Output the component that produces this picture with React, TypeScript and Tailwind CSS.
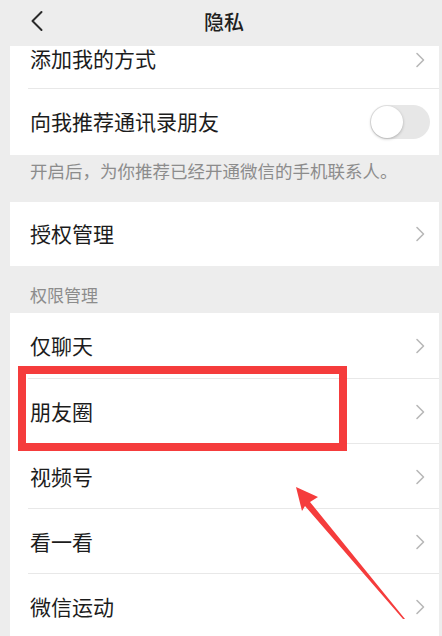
import React from 'react'

const font = { fontFamily: '"Noto Sans CJK SC", "Noto Sans", sans-serif' }

function Chevron() {
  return (
    <svg width="10" height="16" viewBox="0 0 10 16" className="shrink-0">
      <path d="M2 1.5 L8.5 8 L2 14.5" fill="none" stroke="#b8b8b8" strokeWidth="1.6" strokeLinecap="round" strokeLinejoin="round" />
    </svg>
  )
}

function Row({ label, divider = true, h = 'h-[65px]' }: { label: string; divider?: boolean; h?: string }) {
  return (
    <div className={`relative flex items-center justify-between bg-white pl-5 pr-[14px] ${h}`}>
      <span className="text-[21px] leading-[28px] text-[#1c1c1c] -mt-[2px]">{label}</span>
      <Chevron />
      {divider && <div className="absolute bottom-0 left-[18px] right-0 h-px bg-[#e8e8e8]" />}
    </div>
  )
}

export default function App() {
  const permRows = ['仅聊天', '朋友圈', '视频号', '看一看', '微信运动']

  return (
    <div className="relative w-[442px] h-[636px] overflow-hidden bg-[#ededed]" style={font}>
      {/* header */}
      <div className="relative flex h-[46px] items-center justify-center bg-[#ededed]">
        <svg width="14" height="22" viewBox="0 0 14 22" className="absolute left-[30px] top-[10px]">
          <path d="M11.5 2 L2.5 11 L11.5 20" fill="none" stroke="#2a2a2a" strokeWidth="2" strokeLinecap="round" strokeLinejoin="round" />
        </svg>
        <span className="text-[20px] font-medium text-[#1f1f1f] pb-[3px] pl-[6px]">隐私</span>
      </div>

      <div className="ml-[10px] mr-[3px]">
        {/* partially scrolled row */}
        <div className="relative flex h-[43px] items-start justify-between bg-white pl-5 pr-[14px]">
          <span className="text-[21px] leading-[28px] text-[#1c1c1c] -mt-[2px]">添加我的方式</span>
          <div className="flex h-[28px] items-center">
            <Chevron />
          </div>
          <div className="absolute bottom-0 left-[18px] right-0 h-px bg-[#e8e8e8]" />
        </div>

        <div className="flex h-[66px] items-center justify-between bg-white pl-5 pr-[9px]">
          <span className="text-[21px] leading-[28px] text-[#1c1c1c] -mt-[2px]">向我推荐通讯录朋友</span>
          <div className="relative h-[34px] w-[60px] rounded-full bg-[#e7e7e7]">
            <div className="absolute left-[1px] top-[1px] h-[32px] w-[32px] rounded-full bg-white shadow-[0_1px_3px_rgba(0,0,0,0.25)]" />
          </div>
        </div>

        <div className="flex h-[47px] items-start pl-5 pt-[3px]">
          <span className="text-[17.5px] leading-[26px] text-[#8c8c8c]">开启后，为你推荐已经开通微信的手机联系人。</span>
        </div>

        <Row label="授权管理" divider={false} h="h-[64px]" />

        <div className="flex h-[47px] items-end pl-5 pb-[5px]">
          <span className="text-[17px] leading-[26px] text-[#8c8c8c]">权限管理</span>
        </div>

        {permRows.map((r, i) => (
          <Row key={r} label={r} divider={i < permRows.length - 1} h={i === 0 ? 'h-[66px]' : 'h-[65px]'} />
        ))}
      </div>

      {/* highlight box */}
      <div className="absolute left-[18px] top-[366px] h-[85px] w-[329px] border-[8px] border-[#f53c3c]" />

      {/* arrow */}
      <svg className="absolute left-0 top-0" width="442" height="636" viewBox="0 0 442 636">
        <polygon points="296,487 318,497 310,502 405,619 403,619 305,506 302,511" fill="#f53c3c" />
      </svg>
    </div>
  )
}
